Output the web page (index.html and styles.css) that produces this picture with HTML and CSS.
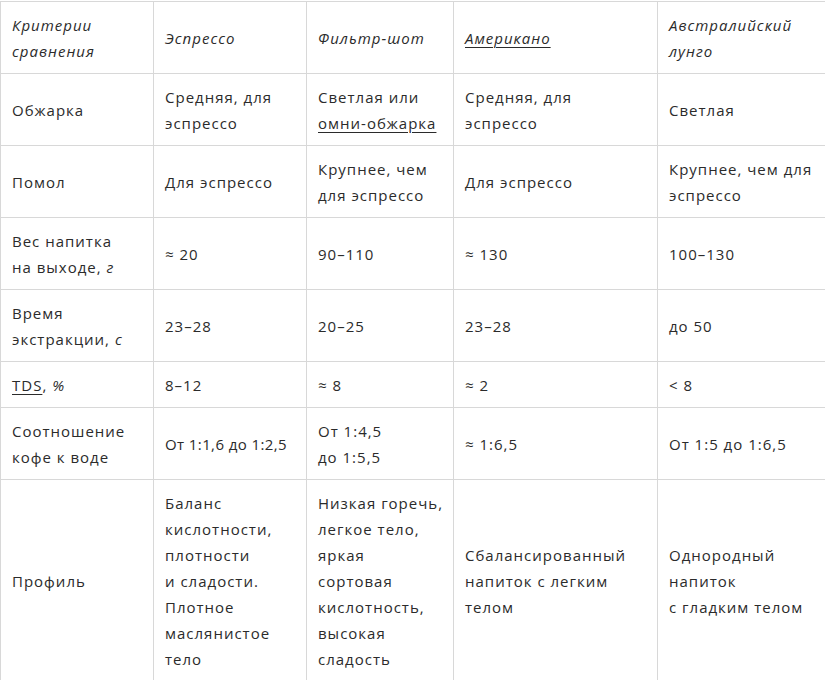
FILE: index.html
```html
<!DOCTYPE html>
<html lang="ru">
<head>
<meta charset="utf-8">
<link rel="stylesheet" href="styles.css">
</head>
<body>
<table class="cmp">
  <colgroup>
    <col class="c1"><col class="c2"><col class="c3"><col class="c4"><col class="c5">
  </colgroup>
  <thead>
    <tr class="r-head">
      <th>Критерии сравнения</th>
      <th>Эспрессо</th>
      <th>Фильтр-шот</th>
      <th><a href="#">Американо</a></th>
      <th>Австралийский лунго</th>
    </tr>
  </thead>
  <tbody>
    <tr>
      <td>Обжарка</td>
      <td>Средняя, для эспрессо</td>
      <td>Светлая или <a href="#">омни-обжарка</a></td>
      <td>Средняя, для<br>эспрессо</td>
      <td>Светлая</td>
    </tr>
    <tr>
      <td>Помол</td>
      <td>Для эспрессо</td>
      <td>Крупнее, чем для эспрессо</td>
      <td>Для эспрессо</td>
      <td>Крупнее, чем для эспрессо</td>
    </tr>
    <tr>
      <td>Вес напитка на&nbsp;выходе, <i>г</i></td>
      <td>≈ 20</td>
      <td>90–110</td>
      <td>≈ 130</td>
      <td>100–130</td>
    </tr>
    <tr>
      <td>Время экстракции, <i>с</i></td>
      <td>23–28</td>
      <td>20–25</td>
      <td>23–28</td>
      <td>до 50</td>
    </tr>
    <tr>
      <td><a href="#">TDS</a>, <i>%</i></td>
      <td>8–12</td>
      <td>≈ 8</td>
      <td>≈ 2</td>
      <td>&lt; 8</td>
    </tr>
    <tr>
      <td>Соотношение кофе к воде</td>
      <td class="nw tight">От 1:1,6 до 1:2,5</td>
      <td>От 1:4,5<br>до 1:5,5</td>
      <td>≈ 1:6,5</td>
      <td>От 1:5 до 1:6,5</td>
    </tr>
    <tr>
      <td>Профиль</td>
      <td class="nw">Баланс<br>кислотности,<br>плотности<br>и&nbsp;сладости.<br>Плотное<br>маслянистое<br>тело</td>
      <td class="nw">Низкая горечь,<br>легкое тело,<br>яркая<br>сортовая<br>кислотность,<br>высокая<br>сладость</td>
      <td class="nw">Сбалансированный<br>напиток с&nbsp;легким<br>телом</td>
      <td class="nw">Однородный<br>напиток<br>с&nbsp;гладким телом</td>
    </tr>
  </tbody>
</table>
</body>
</html>
```

FILE: styles.css
```css
html, body {
  margin: 0;
  padding: 0;
  background: #fff;
  overflow: hidden;
}
body {
  font-family: "Open Sans", "Liberation Sans", sans-serif;
  font-size: 15px;
  line-height: 26px;
  color: #2b2b2b;
  letter-spacing: 1px;
}
.cmp {
  border-collapse: collapse;
  table-layout: fixed;
  width: 840px;
  margin: 1px 0 0 0;
}
.c1 { width: 153px; }
.c2 { width: 153px; }
.c3 { width: 147px; }
.c4 { width: 204px; }
.c5 { width: 183px; }
.cmp th,
.cmp td {
  border: 1px solid #d8d8d8;
  padding: 10px 10px 9px 11px;
  vertical-align: middle;
  text-align: left;
  font-weight: 400;
}
.cmp th {
  font-style: italic;
}
.cmp .nw {
  white-space: nowrap;
}
.cmp .tight {
  letter-spacing: 0.4px;
}
.cmp a {
  color: inherit;
  text-decoration: underline;
  text-underline-offset: 3px;
  text-decoration-thickness: 1px;
}
.cmp i {
  font-style: italic;
}
```
